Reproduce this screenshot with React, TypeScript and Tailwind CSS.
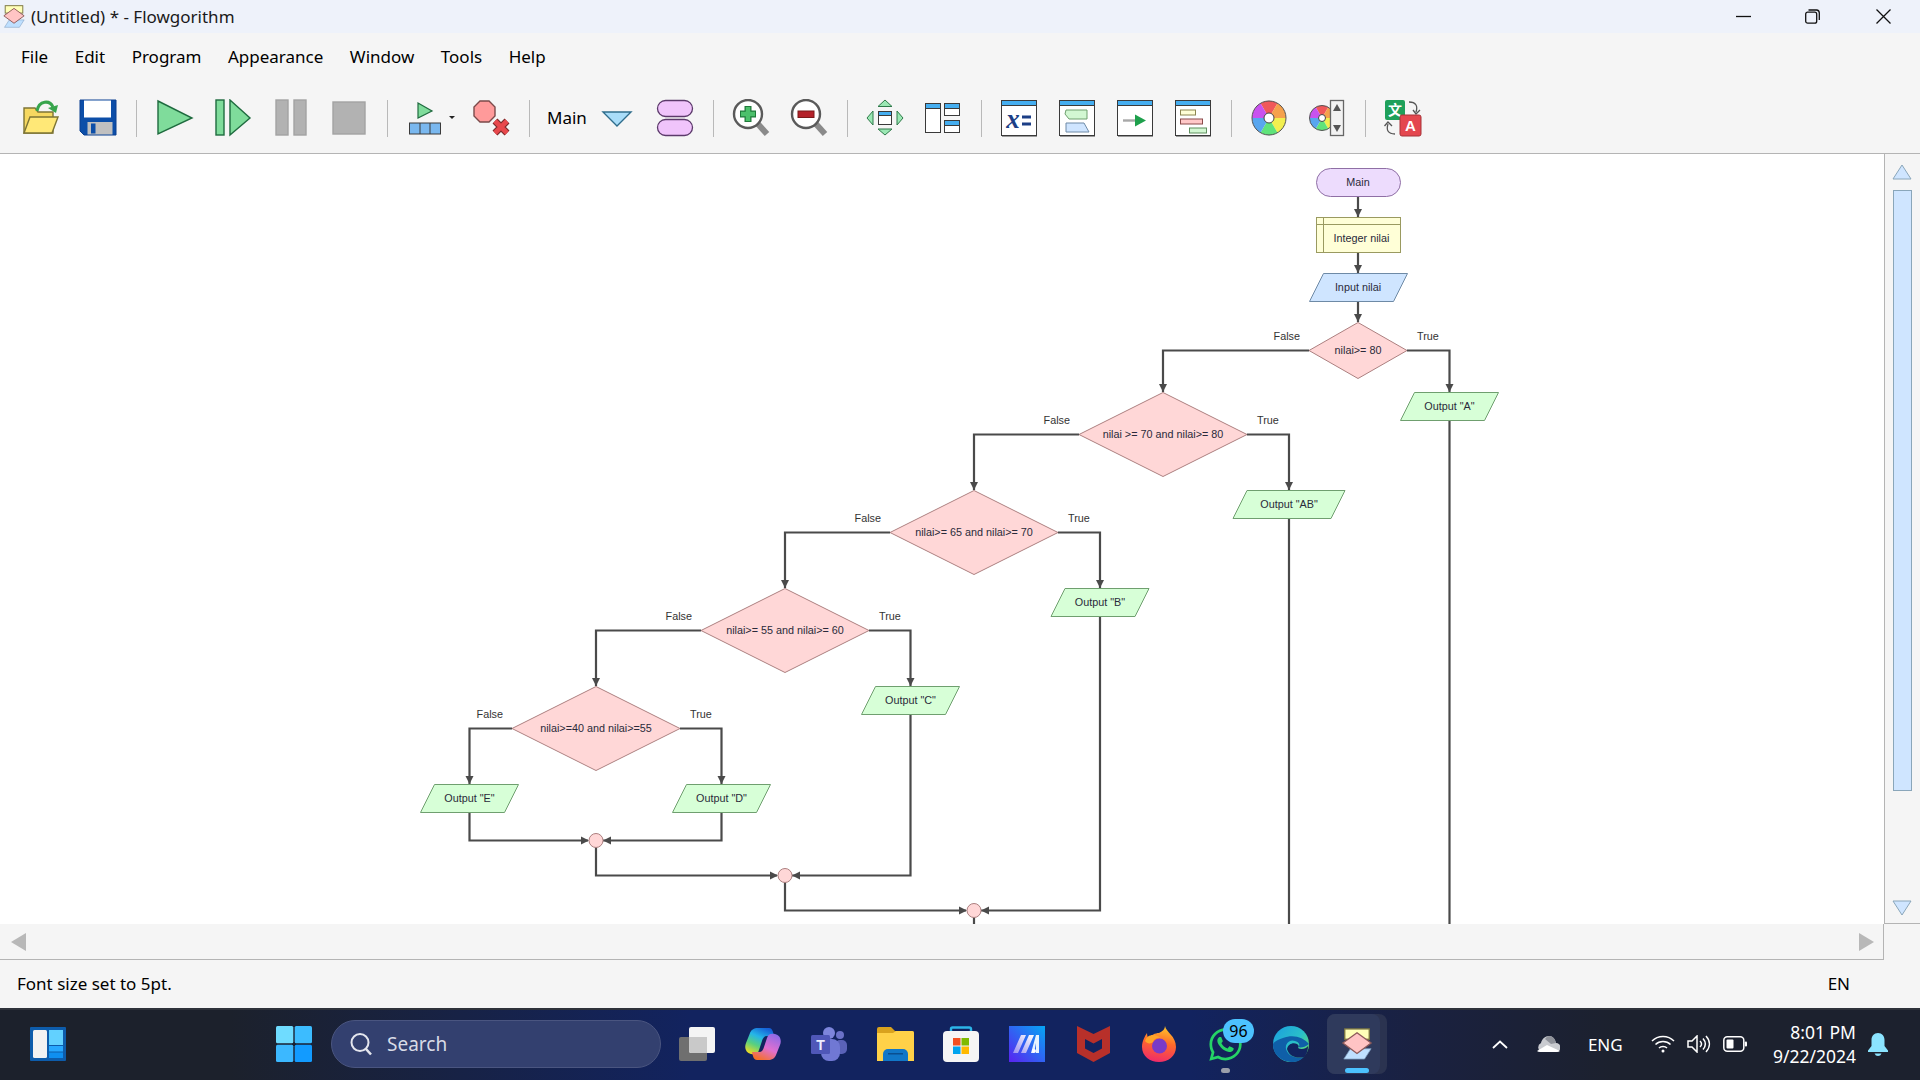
import type { ReactNode } from "react";
import { FaWhatsapp } from "react-icons/fa";

const uiFont = "font-['Noto_Sans',sans-serif]";
const menus = ["File", "Edit", "Program", "Appearance", "Window", "Tools", "Help"];

const decisions = [
  { cx: 1358, cy: 350.5, hw: 49, hh: 28, text: "nilai>= 80", fx: 1163, tx: 1449.5 },
  { cx: 1163, cy: 434.5, hw: 84, hh: 42, text: "nilai >= 70 and nilai>= 80", fx: 974, tx: 1289 },
  { cx: 974, cy: 532.5, hw: 84, hh: 42, text: "nilai>= 65 and nilai>= 70", fx: 785, tx: 1100 },
  { cx: 785, cy: 630.5, hw: 84, hh: 42, text: "nilai>= 55 and nilai>= 60", fx: 596, tx: 910.5 },
  { cx: 596, cy: 728.5, hw: 84, hh: 42, text: "nilai>=40 and nilai>=55", fx: 469.5, tx: 721.5 },
];

const outputs = [
  { cx: 1449.5, y: 392.5, hw: 49, text: 'Output "A"' },
  { cx: 1289, y: 490.5, hw: 56, text: 'Output "AB"' },
  { cx: 1100, y: 588.5, hw: 49, text: 'Output "B"' },
  { cx: 910.5, y: 686.5, hw: 49, text: 'Output "C"' },
  { cx: 721.5, y: 784.5, hw: 49, text: 'Output "D"' },
  { cx: 469.5, y: 784.5, hw: 49, text: 'Output "E"' },
];

const wires = [
  "M1358 196V217", "M1358 252V273", "M1358 301V322",
  "M1309 350.5H1163V392", "M1407 350.5H1449.5V392", "M1449.5 420V924",
  "M1079 434.5H974V490", "M1247 434.5H1289V490", "M1289 518V924",
  "M890 532.5H785V588", "M1058 532.5H1100V588", "M1100 616V910.5H981",
  "M701 630.5H596V686", "M869 630.5H910.5V686", "M910.5 714V875.5H792",
  "M512 728.5H469.5V784", "M680 728.5H721.5V784",
  "M469.5 812V840.5H588", "M721.5 812V840.5H603",
  "M596 847V875.5H777", "M785 882V910.5H966", "M974 917V924",
];

const arrows = [
  [1358, 217, "d"], [1358, 273, "d"], [1358, 322, "d"], [1163, 392, "d"], [1449.5, 392, "d"],
  [974, 490, "d"], [1289, 490, "d"], [785, 588, "d"], [1100, 588, "d"], [596, 686, "d"],
  [910.5, 686, "d"], [469.5, 784, "d"], [721.5, 784, "d"],
  [589, 840.5, "r"], [603, 840.5, "l"], [778, 875.5, "r"], [792, 875.5, "l"], [967, 910.5, "r"], [981, 910.5, "l"],
] as const;

function Diagram() {
  return (
    <svg viewBox="0 154 1884 770" className="block h-[770px] w-[1884px]" fontFamily="'Liberation Sans', Arial, sans-serif" fontSize="10.8">
      <g fill="none" stroke="#4a4a4a" strokeWidth="2.2">
        {wires.map((d) => <path key={d} d={d} />)}
      </g>
      <g fill="#4a4a4a">
        {arrows.map(([x, y, dir]) => (
          <polygon
            key={`${x}-${y}`}
            points={
              dir === "d"
                ? `${x - 4},${y - 8} ${x + 4},${y - 8} ${x},${y}`
                : dir === "r"
                ? `${x - 8},${y - 4} ${x - 8},${y + 4} ${x},${y}`
                : `${x + 8},${y - 4} ${x + 8},${y + 4} ${x},${y}`
            }
          />
        ))}
      </g>
      <rect x="1316.5" y="168.5" width="84" height="28" rx="14" fill="#eddcfd" stroke="#8f6fa5" />
      <text x="1358" y="186" textAnchor="middle" fill="#2a2a3a">Main</text>
      <rect x="1316.5" y="217.5" width="84" height="35" fill="#ffffd7" stroke="#9a9a60" />
      <path d="M1323.5 217.5V252.5M1316.5 224.5H1400.5" stroke="#9a9a60" fill="none" />
      <text x="1361.5" y="242" textAnchor="middle" fill="#2a2a3a">Integer nilai</text>
      <polygon points="1323.5,273.5 1407.5,273.5 1393.5,301.5 1309.5,301.5" fill="#cfe5ff" stroke="#6e8aa6" />
      <text x="1358" y="291" textAnchor="middle" fill="#2a2a3a">Input nilai</text>
      {decisions.map((d) => (
        <g key={d.text}>
          <polygon
            points={`${d.cx},${d.cy - d.hh} ${d.cx + d.hw},${d.cy} ${d.cx},${d.cy + d.hh} ${d.cx - d.hw},${d.cy}`}
            fill="#ffd7d7"
            stroke="#ac8080"
          />
          <text x={d.cx} y={d.cy + 3.5} textAnchor="middle" fill="#2a2a3a">{d.text}</text>
          <text x={d.cx - d.hw - 9} y={d.cy - 10.5} textAnchor="end" fill="#333">False</text>
          <text x={d.cx + d.hw + 10} y={d.cy - 10.5} fill="#333">True</text>
        </g>
      ))}
      {outputs.map((o) => (
        <g key={o.text}>
          <polygon
            points={`${o.cx - o.hw + 14},${o.y} ${o.cx + o.hw},${o.y} ${o.cx + o.hw - 14},${o.y + 28} ${o.cx - o.hw},${o.y + 28}`}
            fill="#d7ffd7"
            stroke="#6f9f6f"
          />
          <text x={o.cx} y={o.y + 17.5} textAnchor="middle" fill="#2a2a3a">{o.text}</text>
        </g>
      ))}
      {[[596, 840.5], [785, 875.5], [974, 910.5]].map(([x, y]) => (
        <circle key={x} cx={x} cy={y} r="7" fill="#ffd7d7" stroke="#ac8080" />
      ))}
    </svg>
  );
}

function Logo({ className }: { className: string }) {
  return (
    <svg viewBox="0 0 32 34" className={className}>
      <rect x="3" y="1" width="26" height="11" fill="#ffffb8" stroke="#7c7640" strokeWidth="1.4" />
      <polygon points="9,22 31,22 24,33 2,33" fill="#bfe0ff" stroke="#7d9dbd" strokeWidth="0.8" />
      <polygon points="16,5 31,16 16,27 1,16" fill="#ffc4c4" stroke="#8c5a5a" strokeWidth="1.4" />
    </svg>
  );
}

const Sep = ({ w = "w-[18px]" }: { w?: string }) => (
  <div className={`flex h-[37px] ${w} shrink-0 justify-center`}>
    <div className="h-full w-px bg-[#b9b9b9]" />
  </div>
);

const Tool = ({ children }: { children: ReactNode }) => (
  <div className="relative flex h-[38px] w-[58px] shrink-0 items-center justify-center">{children}</div>
);

const Ico = ({ children }: { children: ReactNode }) => (
  <svg viewBox="0 0 40 38" className="h-[38px] w-10">{children}</svg>
);

function DocIcon({ children }: { children?: ReactNode }) {
  return (
    <Ico>
      <rect x="2.5" y="1.5" width="35" height="35" fill="#fff" stroke="#3a3a3a" />
      <rect x="2.5" y="1.5" width="35" height="5" fill="#45aef0" stroke="#3a3a3a" />
      <path d="M3 37.5H38" stroke="#9a9a9a" />
      {children}
    </Ico>
  );
}

function Wheel({ cx, cy, r, hub }: { cx: number; cy: number; r: number; hub: number }) {
  const colors = ["#f0585a", "#f5a14c", "#f2ef4f", "#5fe37a", "#58a6ef", "#c952ef"];
  const pt = (a: number, rad: number) => {
    const t = ((a - 90) * Math.PI) / 180;
    return `${cx + rad * Math.cos(t)} ${cy + rad * Math.sin(t)}`;
  };
  return (
    <g>
      {colors.map((c, i) => (
        <path key={c} d={`M${cx} ${cy}L${pt(i * 60 - 30, r)}A${r} ${r} 0 0 1 ${pt(i * 60 + 30, r)}Z`} fill={c} />
      ))}
      <circle cx={cx} cy={cy} r={r} fill="none" stroke="#555" />
      <circle cx={cx} cy={cy} r={hub} fill="#fff" stroke="#444" />
    </g>
  );
}

function Magnifier({ children }: { children: ReactNode }) {
  return (
    <Ico>
      <path d="M27 25L36 35" stroke="#8a8a8a" strokeWidth="6" />
      <circle cx="17" cy="15" r="14" fill="#fff" stroke="#5a5a5a" strokeWidth="2.4" />
      {children}
    </Ico>
  );
}

function Toolbar() {
  return (
    <div className="flex h-[79px] items-start pl-[11px]">
      <div className="mt-[25px] flex items-center">
        <Tool>
          <Ico>
            <path d="M4 34V9H15L18 13H33V34Z" fill="#f6d860" stroke="#7d7434" strokeWidth="1.4" />
            <path d="M4 34L10 18H38L32 34Z" fill="#ffe877" stroke="#7d7434" strokeWidth="1.4" />
            <path d="M17 12C19 1 30 1 33 8" fill="none" stroke="#37a54c" strokeWidth="3" />
            <polygon points="28,9 38,6 36,14" fill="#37a54c" />
          </Ico>
        </Tool>
        <Tool>
          <Ico>
            <path d="M2 1H38V36H6L2 32Z" fill="#0c4ea8" stroke="#0a3f90" />
            <rect x="6" y="1.500" width="27" height="17" fill="#fff" />
            <rect x="9.500" y="23" width="25" height="12.500" fill="#c0c0c0" />
            <rect x="13" y="24.500" width="4.500" height="10" fill="#0c4ea8" />
          </Ico>
        </Tool>
        <Sep w="w-[19px]" />
        <Tool>
          <Ico><polygon points="3,2 37,19 3,35" fill="#7fdc9b" stroke="#1f6b3f" strokeWidth="1.4" /></Ico>
        </Tool>
        <Tool>
          <Ico>
            <rect x="3" y="1" width="8" height="35" fill="#7fdc9b" stroke="#1f6b3f" strokeWidth="1.4" />
            <polygon points="17,1 37,19 17,36" fill="#7fdc9b" stroke="#1f6b3f" strokeWidth="1.4" />
          </Ico>
        </Tool>
        <Tool>
          <Ico>
            <rect x="5" y="1" width="12" height="35" fill="#b2b2b2" stroke="#a3a3a3" strokeWidth="1.4" />
            <rect x="23" y="1" width="12" height="35" fill="#b2b2b2" stroke="#a3a3a3" strokeWidth="1.4" />
          </Ico>
        </Tool>
        <Tool>
          <Ico><rect x="4" y="3" width="32" height="32" fill="#b2b2b2" stroke="#a3a3a3" strokeWidth="1.4" /></Ico>
        </Tool>
        <Sep />
        <Tool>
          <Ico>
            <polygon points="13,4 27,12 13,19" fill="#7fdc9b" stroke="#1f6b3f" strokeWidth="1.2" />
            <rect x="4.5" y="24" width="31" height="11" fill="#7ab8ef" stroke="#3a3a3a" />
            <path d="M15 24V35M25 24V35" stroke="#3a3a3a" />
          </Ico>
          <div className="absolute right-[-1px] top-[17px] h-0 w-0 border-x-[3px] border-t-[3px] border-x-transparent border-t-[#222]" />
        </Tool>
        <div className="w-[8px]" />
        <Tool>
          <Ico>
            <polygon points="9,2 18,2 24,8 24,17 18,23 9,23 3,17 3,8" fill="#ff9a9a" stroke="#7b4a4a" strokeWidth="1.4" />
            <path d="M24 22L36 34M36 22L24 34" stroke="#7a2a2a" strokeWidth="7" />
            <path d="M24 22L36 34M36 22L24 34" stroke="#e8484c" strokeWidth="4.6" />
          </Ico>
        </Tool>
        <Sep w="w-[19px]" />
        <span className={`${uiFont} w-[49px] shrink-0 pb-px pl-[8px] text-[17px] leading-none text-black`}>Main</span>
        <Tool>
          <Ico><polygon points="6,13 34,13 20,27" fill="#a9ddf9" stroke="#2f6d8c" strokeWidth="1.4" /></Ico>
        </Tool>
        <Tool>
          <Ico>
            <rect x="2.5" y="1.5" width="35" height="16" rx="8" fill="#f0c4fb" stroke="#5c3a6b" strokeWidth="1.3" />
            <rect x="2.5" y="20.5" width="35" height="16" rx="8" fill="#f0c4fb" stroke="#5c3a6b" strokeWidth="1.3" />
          </Ico>
        </Tool>
        <Sep />
        <Tool>
          <Magnifier>
            <path d="M17 7V23M9 15H25" stroke="#1f7a3a" strokeWidth="7" />
            <path d="M17 8V22M10 15H24" stroke="#4cc06b" strokeWidth="4.5" />
          </Magnifier>
        </Tool>
        <Tool>
          <Magnifier>
            <rect x="9" y="12" width="16" height="6.5" fill="#b4222a" stroke="#7a1a1a" />
          </Magnifier>
        </Tool>
        <Sep />
        <Tool>
          <Ico>
            <rect x="13.5" y="12.5" width="13" height="13" fill="#fff" stroke="#3a3a3a" />
            <rect x="13.5" y="12.5" width="13" height="4" fill="#45aef0" stroke="#3a3a3a" />
            <g fill="#9be8b4" stroke="#2f7a4a">
              <polygon points="20,1 27,7.5 13,7.5" />
              <polygon points="20,36 27,30 13,30" />
              <polygon points="2,19 8,12 8,26" />
              <polygon points="38,19 32,12 32,26" />
            </g>
          </Ico>
        </Tool>
        <Tool>
          <Ico>
            <rect x="2.5" y="4.5" width="15" height="29" fill="#fff" stroke="#3a3a3a" />
            <rect x="2.5" y="4.5" width="15" height="5" fill="#45aef0" stroke="#3a3a3a" />
            <rect x="21.5" y="4.5" width="15" height="12" fill="#fff" stroke="#3a3a3a" />
            <rect x="21.5" y="4.5" width="15" height="5" fill="#45aef0" stroke="#3a3a3a" />
            <rect x="21.5" y="21.5" width="15" height="12" fill="#fff" stroke="#3a3a3a" />
            <rect x="21.5" y="21.5" width="15" height="5" fill="#45aef0" stroke="#3a3a3a" />
          </Ico>
        </Tool>
        <Sep />
        <Tool>
          <DocIcon>
            <text x="14" y="29" fontFamily="'Liberation Serif', serif" fontStyle="italic" fontWeight="bold" fontSize="27" fill="#1c3f86" textAnchor="middle">x</text>
            <path d="M23 18H32M23 25H32" stroke="#1c3f86" strokeWidth="3" />
          </DocIcon>
        </Tool>
        <Tool>
          <DocIcon>
            <polygon points="9,11 30,11 30,20 12,20 8,15" fill="#d2f7d2" stroke="#6f9f6f" />
            <polygon points="9,24 27,24 32,33 9,33" fill="#cfe5ff" stroke="#6e8aa6" />
          </DocIcon>
        </Tool>
        <Tool>
          <DocIcon>
            <path d="M8 21.5H23" stroke="#a8a8a8" strokeWidth="2.4" />
            <polygon points="20,15.500 31,21.500 20,27.500" fill="#1ea04c" />
          </DocIcon>
        </Tool>
        <Tool>
          <DocIcon>
            <rect x="7.5" y="11" width="15" height="5" fill="#ffffd7" stroke="#8c8650" />
            <rect x="7.5" y="20" width="22" height="5" fill="#ffc8c8" stroke="#8a4a4a" />
            <rect x="16.5" y="29" width="17" height="5" fill="#d2f7d2" stroke="#5f8f5f" />
          </DocIcon>
        </Tool>
        <Sep />
        <Tool>
          <Ico><Wheel cx={20} cy={19} r={17} hub={5} /></Ico>
        </Tool>
        <Tool>
          <Ico>
            <Wheel cx={15} cy={19} r={12.5} hub={3.5} />
            <rect x="23.5" y="1.5" width="13" height="35" fill="#f2f2f2" stroke="#666" strokeWidth="1.3" />
            <polygon points="30,5 34,12 26,12" fill="#555" />
            <polygon points="30,33 34,26 26,26" fill="#555" />
          </Ico>
        </Tool>
        <Sep />
        <Tool>
          <Ico>
            <rect x="2" y="1" width="20" height="20" rx="2" fill="#1ea05a" />
            <text x="12" y="16" textAnchor="middle" fontSize="14" fontWeight="bold" fill="#fff" fontFamily="'Noto Sans CJK SC', sans-serif">文</text>
            <path d="M26 3C33 3 35 7 33 13M30 11L33 15L37 11" fill="none" stroke="#555" strokeWidth="1.3" />
            <path d="M12 35C5 35 3 31 5 25M1.500 27L5 23L9 27" fill="none" stroke="#555" strokeWidth="1.3" />
            <rect x="17" y="16" width="21" height="21" rx="2" fill="#e4474f" stroke="#a83238" />
            <text x="27.500" y="32" textAnchor="middle" fontSize="15" fontWeight="bold" fill="#fff" fontFamily="'Liberation Sans', sans-serif">A</text>
          </Ico>
        </Tool>
      </div>
    </div>
  );
}

function TaskIcon({ children }: { children: ReactNode }) {
  return <div className="relative flex h-[72px] w-[66px] shrink-0 items-center justify-center">{children}</div>;
}

function Taskbar() {
  return (
    <div className="flex h-[72px] items-center border-t-2 border-[#2e323a] bg-[linear-gradient(90deg,#1c212c_0%,#1c212c_12%,#12235f_36%,#12235f_62%,#1a2140_74%,#1c212e_84%,#1c212e_100%)] pb-[2px] pl-[30px]">
      <svg viewBox="0 0 36 34" className="h-[34px] w-9 shrink-0">
        <rect width="36" height="34" rx="1" fill="#0d5cab" />
        <rect x="3" y="3" width="14" height="28" rx="1.500" fill="#f2f2f2" />
        <rect x="19" y="3" width="14" height="15" fill="#62d1ff" />
        <rect x="19" y="19" width="14" height="5.500" fill="#27a8ff" />
        <rect x="19" y="25.500" width="14" height="5.500" fill="#0f8ff0" />
      </svg>
      <svg viewBox="0 0 36 36" className="ml-[210px] h-9 w-9 shrink-0">
        <rect width="17.300" height="17.300" rx="1.500" fill="#6fdcff" />
        <rect x="18.700" width="17.300" height="17.300" rx="1.500" fill="#3cbcff" />
        <rect y="18.700" width="17.300" height="17.300" rx="1.500" fill="#3cb8ff" />
        <rect x="18.700" y="18.700" width="17.300" height="17.300" rx="1.500" fill="#129bff" />
      </svg>
      <div className={`${uiFont} ml-[19px] flex h-12 w-[330px] shrink-0 items-center rounded-full border border-[#4a5580] bg-[#33406f] pl-[17px] text-[19px] text-[#d8dbe6]`}>
        <svg viewBox="0 0 24 24" className="h-6 w-6 shrink-0" fill="none" stroke="#e4e6ee" strokeWidth="2">
          <circle cx="11" cy="10.500" r="8.500" />
          <path d="M17 17L22 22.500" strokeWidth="2.600" />
        </svg>
        <span className="ml-[14px]">Search</span>
      </div>
      <div className="ml-[3px] flex items-center">
        <TaskIcon>
          <svg viewBox="0 0 36 34" className="h-[34px] w-9">
            <rect x="0" y="10" width="28" height="24" rx="2" fill="#6f6f6f" />
            <rect x="10" y="0" width="26" height="26" rx="2" fill="#f4f4f4" />
            <path d="M10 10H28V26H12A2 2 0 0 1 10 24Z" fill="#c9c9c9" />
          </svg>
        </TaskIcon>
        <TaskIcon>
          <svg viewBox="0 0 36 34" className="h-[34px] w-9">
            <defs>
              <linearGradient id="cop1" x1="0.700" y1="0" x2="0.200" y2="1"><stop stopColor="#1560d8" /><stop offset="0.350" stopColor="#25b5e8" /><stop offset="0.650" stopColor="#58d080" /><stop offset="1" stopColor="#f5dc20" /></linearGradient>
              <linearGradient id="cop2" x1="0.800" y1="0" x2="0.300" y2="1"><stop stopColor="#8a6ae8" /><stop offset="0.550" stopColor="#e070d0" /><stop offset="1" stopColor="#f5702a" /></linearGradient>
            </defs>
            <path d="M13 1H24C27 1 28 4 29 9H22C19 9 18 11 17 14L14 23C13 27 10 28 6 27C1 26 -1 21 1 16L5 6C6 3 9 1 13 1Z" fill="url(#cop1)" />
            <path d="M23 33H12C9 33 8 30 7 25H14C17 25 18 23 19 20L22 11C23 7 26 6 30 7C35 8 37 13 35 18L31 28C30 31 27 33 23 33Z" fill="url(#cop2)" />
          </svg>
        </TaskIcon>
        <TaskIcon>
          <svg viewBox="0 0 36 34" className="h-[34px] w-9">
            <circle cx="29" cy="8" r="4" fill="#6a71c8" />
            <rect x="24" y="13" width="12" height="14" rx="5" fill="#5a62b8" />
            <circle cx="18" cy="6" r="6" fill="#7d85dc" />
            <rect x="10" y="12" width="19" height="22" rx="8" fill="#7078d4" />
            <rect x="0" y="8" width="19" height="19" rx="1.500" fill="#4f57b8" />
            <text x="9.500" y="22.500" textAnchor="middle" fontSize="14" fontWeight="bold" fill="#eef" fontFamily="'Liberation Sans', sans-serif">T</text>
          </svg>
        </TaskIcon>
        <TaskIcon>
          <svg viewBox="0 0 37 34" className="h-[34px] w-[37px]">
            <path d="M0 2A2 2 0 0 1 2 0H14L18 4H35A2 2 0 0 1 37 6V14H0Z" fill="#d9a21e" />
            <path d="M0 6H16L19 4H35A2 2 0 0 1 37 6V34H0Z" fill="#ffd148" />
            <path d="M6 34V27A5 5 0 0 1 11 22H26A5 5 0 0 1 31 27V34Z" fill="#1177c8" />
            <rect x="11" y="26" width="15" height="1.500" fill="#0a4f90" />
          </svg>
        </TaskIcon>
        <TaskIcon>
          <svg viewBox="0 0 36 36" className="h-9 w-9">
            <path d="M8 8V3A1.500 1.500 0 0 1 9.500 1.500H26.500A1.500 1.500 0 0 1 28 3V8" fill="none" stroke="#2cb5e8" strokeWidth="2.400" />
            <rect y="5" width="36" height="31" rx="4" fill="#f5f5f5" />
            <rect x="10" y="12" width="7.500" height="7.500" fill="#f25022" />
            <rect x="18.500" y="12" width="7.500" height="7.500" fill="#7fba00" />
            <rect x="10" y="20.500" width="7.500" height="7.500" fill="#00a4ef" />
            <rect x="18.500" y="20.500" width="7.500" height="7.500" fill="#ffb900" />
          </svg>
        </TaskIcon>
        <TaskIcon>
          <svg viewBox="0 0 36 36" className="h-9 w-9">
            <defs>
              <linearGradient id="mAI" x1="1" y1="0" x2="0" y2="1"><stop stopColor="#05a6f5" /><stop offset="1" stopColor="#5a22f0" /></linearGradient>
              <linearGradient id="mAIs" x1="1" y1="0" x2="0" y2="1"><stop stopColor="#ffffff" /><stop offset="1" stopColor="#9a90f0" /></linearGradient>
            </defs>
            <rect width="36" height="36" fill="url(#mAI)" />
            <path d="M4 27L12 9H17L9 27ZM12 27L20 9H25L17 27Z" fill="url(#mAIs)" />
            <path d="M22 27L27 9H30V27H27V17L25 27Z" fill="#e8f4ff" />
            <circle cx="25" cy="25" r="2" fill="#fff" />
          </svg>
        </TaskIcon>
        <TaskIcon>
          <svg viewBox="0 0 33 36" className="h-9 w-[33px]">
            <path d="M0 0L16.500 8L33 0V27L16.500 36L0 27Z" fill="#b8302a" />
            <path d="M8 13L16.500 17.500L25 13V22.500L16.500 27L8 22.500Z" fill="#12235f" />
          </svg>
        </TaskIcon>
        <TaskIcon>
          <svg viewBox="0 0 34 36" className="h-9 w-[34px]">
            <defs>
              <linearGradient id="fx" x1="0.600" y1="0" x2="0.400" y2="1"><stop stopColor="#ffc52a" /><stop offset="0.450" stopColor="#ff6a2a" /><stop offset="1" stopColor="#f02a6a" /></linearGradient>
            </defs>
            <path d="M23 0C24 6 34 10 34 21C34 30 26 36 17 36C8 36 0 30 0 21C0 15 3 10 5 7C5 10 6 12 7 13C9 9 13 7 17 7C21 5 23 3 23 0Z" fill="url(#fx)" />
            <circle cx="17.500" cy="20" r="7.500" fill="#7a3ac8" />
            <path d="M3 15C5 8 13 7 19 12C15 11 12 13 11 16C9 18 5 18 3 15Z" fill="#ffa52a" />
          </svg>
        </TaskIcon>
        <TaskIcon>
          <FaWhatsapp className="h-[37px] w-[37px] text-[#25d366]" />
          <span className={`${uiFont} absolute left-[31px] top-[11px] flex h-6 w-[31px] items-center justify-center rounded-full bg-[#4cc2ff] text-[16px] leading-none text-black`}>96</span>
          <span className="absolute bottom-[7px] left-[29px] h-[5px] w-[9px] rounded-full bg-[#9a9eaa]" />
        </TaskIcon>
        <TaskIcon>
          <svg viewBox="0 0 36 36" className="h-9 w-9">
            <defs>
              <linearGradient id="edge" x1="0" y1="0" x2="1" y2="0.800"><stop stopColor="#1a9ee0" /><stop offset="0.600" stopColor="#2ac0c8" /><stop offset="1" stopColor="#6ade60" /></linearGradient>
            </defs>
            <circle cx="18" cy="18" r="18" fill="url(#edge)" />
            <path d="M0 18C0 30 10 36 20 36C24 36 28 34 31 31C23 33 15 30 13 23C12 17 17 13 22 15C26 16 27 19 26 20.500C24 22 32 22 36 18C30 11 20 8 10 12C4 14 1 16 0 18Z" fill="#0f5fa8" />
            <path d="M14 23C15 18 20 16 24 18C26 19 26 21 25 22C28 24 33 23 35 20C35 26 33 29 31 31C23 33 16 30 14 23Z" fill="#12235f" />
          </svg>
        </TaskIcon>
        <TaskIcon>
          <div className="absolute left-[3px] top-[6px] h-[60px] w-[60px] rounded-lg bg-[#2b3350]" />
          <div className="absolute left-[3px] top-[6px] h-[60px] w-[53px] rounded-lg bg-[#2f3a5c]" />
          <Logo className="relative h-[32px] w-8" />
          <span className="absolute bottom-[7px] left-[21px] h-[5px] w-6 rounded-full bg-[#4cc2ff]" />
        </TaskIcon>
      </div>
      <div className={`${uiFont} ml-auto flex items-center text-white`}>
        <svg viewBox="0 0 16 9" className="mr-[28px] h-[9px] w-4" fill="none" stroke="#fff" strokeWidth="1.800"><path d="M1 8L8 1.500L15 8" /></svg>
        <svg viewBox="0 0 24 16" className="mr-[28px] h-4 w-6">
          <path d="M5 16A5 5 0 0 1 5 7C6 3 9 0 13 0C17 0 19 3 20 7A4.500 4.500 0 0 1 20 16Z" fill="#c9cbd0" />
          <path d="M1 15L11 9L24 15Q23 16 20 16H4Q2 16 1 15Z" fill="#fff" />
          <path d="M13 0C17 0 19 3 20 7L15 8L9 3Q11 0 13 0Z" fill="#8f929a" />
        </svg>
        <span className="w-[34px] text-[17px] leading-none">ENG</span>
        <svg viewBox="0 0 24 18" className="ml-[29px] h-[18px] w-6" fill="none" stroke="#fff" strokeWidth="1.500">
          <path d="M1 6C7 0 17 0 23 6M4.500 9.500C8.500 5.500 15.500 5.500 19.500 9.500M8 13C10 11 14 11 16 13" />
          <circle cx="12" cy="16" r="1.500" fill="#fff" stroke="none" />
        </svg>
        <svg viewBox="0 0 24 18" className="ml-3 h-[18px] w-6" fill="none" stroke="#fff" strokeWidth="1.500">
          <path d="M1 6H5L10 1V17L5 12H1Z" />
          <path d="M13 6C15 8 15 10 13 12M16 3.500C19 7 19 11 16 14.500M19 1C23.500 6 23.500 12 19 17" />
        </svg>
        <svg viewBox="0 0 24 16" className="ml-3 h-4 w-6">
          <rect x="0.800" y="0.800" width="20" height="14.400" rx="3.500" fill="none" stroke="#fff" strokeWidth="1.500" />
          <rect x="3.500" y="3.500" width="7" height="9" rx="1" fill="#fff" />
          <rect x="21.800" y="5.500" width="2.200" height="5" rx="1" fill="#fff" />
        </svg>
        <div className="ml-[26px] flex flex-col items-end text-[17.5px] leading-[24px]">
          <span>8:01 PM</span>
          <span>9/22/2024</span>
        </div>
        <svg viewBox="0 0 20 23" className="ml-[12px] mr-[32px] h-[23px] w-5" fill="#8be4ff">
          <path d="M10 0C6 0 3.500 3 3.500 7V13L0 17.500V19H20V17.500L16.500 13V7C16.500 3 14 0 10 0Z" />
          <path d="M6.500 20.500H13.500Q12.500 23 10 23Q7.500 23 6.500 20.500Z" />
        </svg>
      </div>
    </div>
  );
}

export default function App() {
  return (
    <div className={`${uiFont} flex h-[1080px] w-[1920px] flex-col overflow-hidden bg-[#f5f5f5]`}>
      <header className="flex h-[33px] items-center bg-[#eef2fa]">
        <Logo className="ml-[3px] h-[23px] w-[22px]" />
        <span className="ml-[6px] text-[17px] text-[#1a1a1a]">(Untitled) * - Flowgorithm</span>
        <div className="ml-auto flex items-center">
          <svg viewBox="0 0 15 15" className="h-[15px] w-[15px]" stroke="#111" fill="none" strokeWidth="1.300"><path d="M0 7.500H15" /></svg>
          <svg viewBox="0 0 15 15" className="ml-[54px] h-[15px] w-[15px]" stroke="#111" fill="none" strokeWidth="1.300">
            <rect x="0.700" y="3.200" width="11" height="11" rx="2" />
            <path d="M3.500 1H11.500A3 3 0 0 1 14.300 4V11" />
          </svg>
          <svg viewBox="0 0 15 15" className="ml-[56px] mr-[29px] h-[15px] w-[15px]" stroke="#111" fill="none" strokeWidth="1.300"><path d="M0.500 0.500L14.500 14.500M14.500 0.500L0.500 14.500" /></svg>
        </div>
      </header>
      <nav className="flex h-[41px] items-center gap-[26.5px] pl-[21px] pt-[7px] text-[17px] text-black">
        {menus.map((m) => <span key={m}>{m}</span>)}
      </nav>
      <Toolbar />
      <div className="flex h-[771px] border-t border-[#b4b4b4]">
        <main className="h-[770px] w-[1884px] bg-white"><Diagram /></main>
        <aside className="flex h-[770px] flex-1 flex-col items-center border-b border-l border-[#b4b4b4] pl-[7px] pr-[9px]">
          <svg viewBox="0 0 20 16" className="mt-[10px] h-4 w-5"><polygon points="10,1 19,15 1,15" fill="#cfe5ff" stroke="#8aa6ba" /></svg>
          <div className="mt-[10px] h-[601px] w-[19px] border border-[#8aa6ba] bg-[#cfe5ff]" />
          <svg viewBox="0 0 20 16" className="mt-[109px] h-4 w-5"><polygon points="1,1 19,1 10,15" fill="#cfe5ff" stroke="#8aa6ba" /></svg>
        </aside>
      </div>
      <div className="flex h-[36px]">
        <div className="flex h-[36px] w-[1884px] items-center justify-between border-r border-b border-[#b4b4b4] pl-[11px] pr-[9px]">
          <div className="h-0 w-0 border-y-[9px] border-r-[15px] border-y-transparent border-r-[#b8b8b8]" />
          <div className="h-0 w-0 border-y-[9px] border-l-[15px] border-y-transparent border-l-[#b8b8b8]" />
        </div>
      </div>
      <footer className="flex h-[48px] items-center justify-between pl-[17px] pr-[70px] text-[17px] text-black">
        <span>Font size set to 5pt.</span>
        <span>EN</span>
      </footer>
      <Taskbar />
    </div>
  );
}
